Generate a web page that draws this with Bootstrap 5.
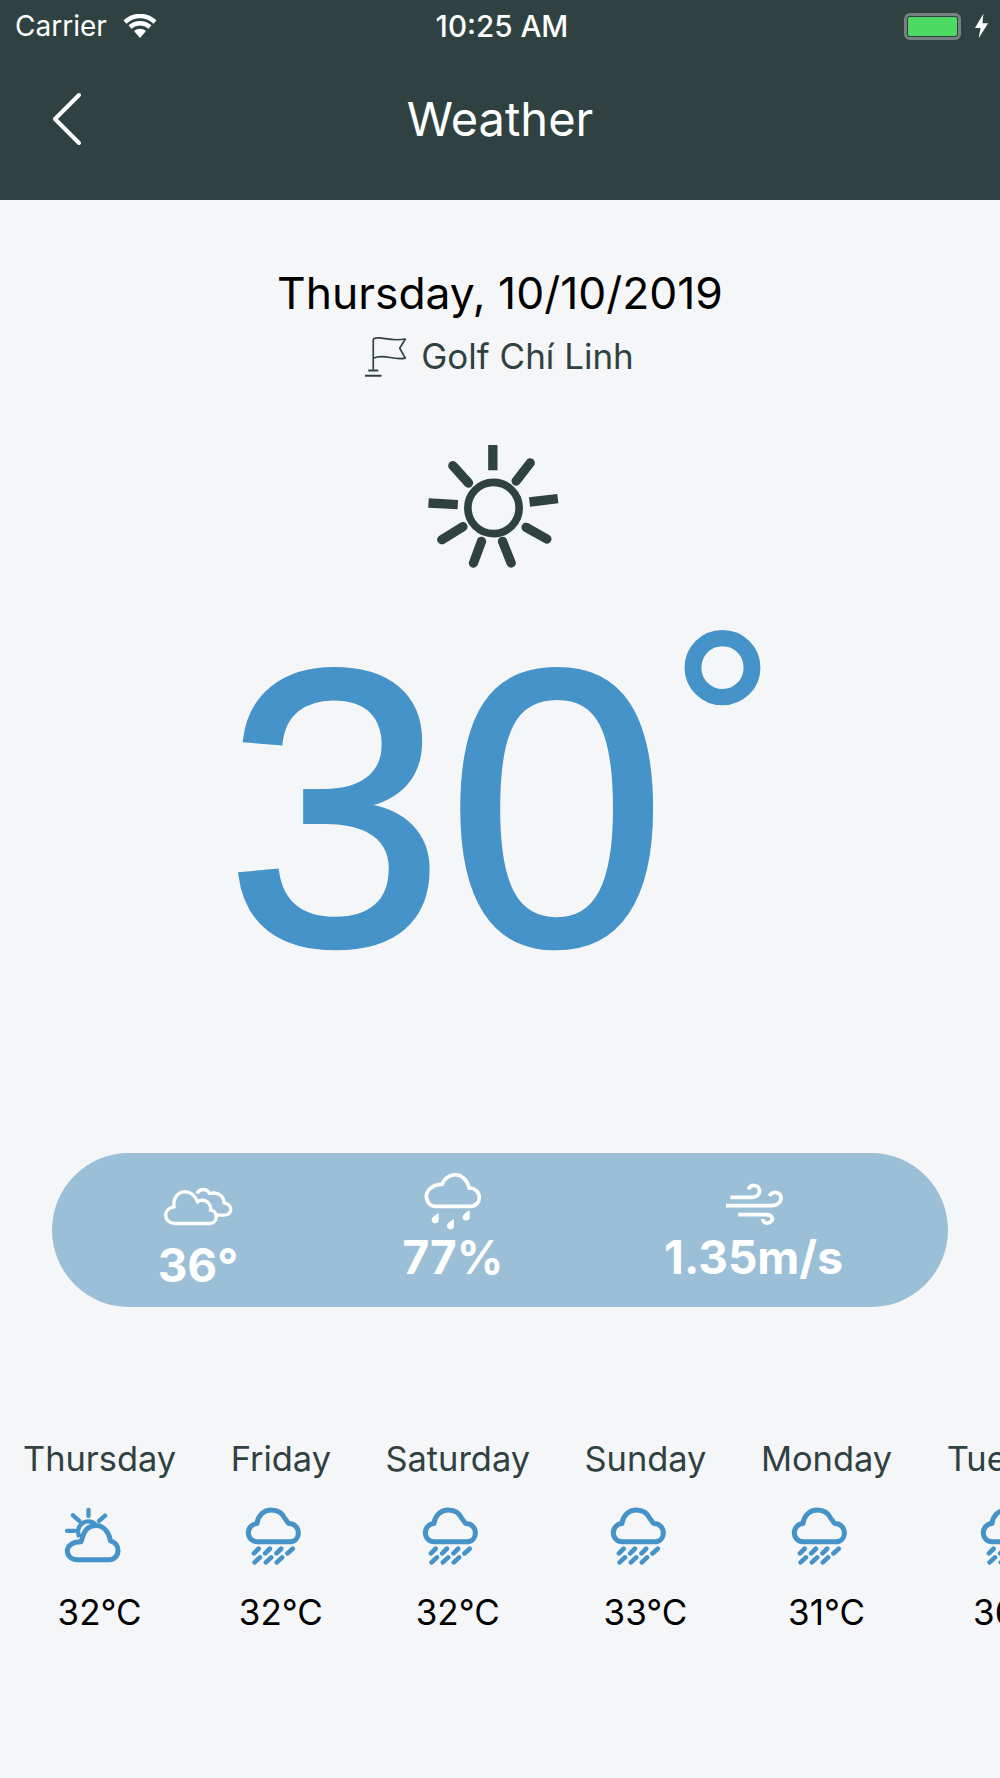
<!DOCTYPE html>
<html lang="en">
<head>
    <meta charset="UTF-8">
    <meta name="viewport" content="width=device-width, initial-scale=1.0">
    <title>Weather</title>
    <link href="https://cdn.jsdelivr.net/npm/bootstrap@5.3.0/dist/css/bootstrap.min.css" rel="stylesheet">
    <style>
        html, body {
            height: 1778px;
            overflow: hidden;
        }
        body {
            background-color: #f5f6f8;
            font-family: Inter, "Liberation Sans", sans-serif;
        }
        .app-head {
            background: #2f4241;
            height: 200px;
            color: #fff;
        }
        .status-row {
            height: 50px;
            padding: 2px 11px 0 15px;
            font-size: 28px;
        }
        .status-side {
            flex: 1 1 0;
        }
        .status-time {
            font-weight: 500;
            font-size: 29.6px;
        }
        .batt-box {
            width: 57px;
            height: 27px;
            border: 3px solid #76827f;
            border-radius: 6px;
            padding: 1px;
            margin-right: -3px;
        }
        .batt-fill {
            background: #4cd964;
            height: 100%;
            border-radius: 2px;
        }
        .title-row {
            height: 120px;
            padding-top: 18px;
        }
        .title-side {
            flex: 1 1 0;
            padding-left: 52px;
        }
        .page-title {
            font-size: 47px;
            font-weight: 400;
            margin: 0;
        }
        .date-line {
            font-size: 44.4px;
            line-height: 52px;
            color: #000;
            margin-top: 67px;
        }
        .place-line {
            font-size: 35px;
            line-height: 44px;
            color: #2f4241;
            margin-top: 15px;
            padding-right: 2px;
            gap: 14px;
        }
        .sun-wrap {
            margin-top: 59px;
            padding-right: 14px;
        }
        .big-temp {
            font-family: "Liberation Sans", sans-serif;
            font-size: 393px;
            line-height: 430px;
            letter-spacing: 3px;
            color: #4593c8;
            height: 430px;
            margin-top: 16px;
            padding-left: 3.4px;
            -webkit-text-stroke: 5px #4593c8;
        }
        .big-deg {
            font-size: 260px;
            line-height: 260px;
            margin-left: 1.6px;
            -webkit-text-stroke: 3px #4593c8;
        }
        .stat-pill {
            background: #9bbfd7;
            height: 154px;
            border-radius: 77px;
            margin: 130px 52px 0;
            color: #fff;
            font-weight: 700;
            font-size: 46px;
            line-height: 54px;
        }
        .stat-one { width: 292px; padding-top: 32px; }
        .stat-one svg { margin-bottom: 12px; }
        .stat-two { width: 218px; padding-top: 20px; }
        .stat-two svg { margin-bottom: -2px; }
        .stat-three { flex: 1 1 0; padding-top: 29px; padding-right: 3px; }
        .stat-three svg { margin-bottom: 4px; }
        .fc-strip {
            margin-top: 130px;
            padding-left: 23px;
            gap: 54.5px;
            white-space: nowrap;
        }
        .fc-day {
            font-size: 34.4px;
            line-height: 44px;
            color: #2f4241;
        }
        .fc-icon {
            margin-top: 26px;
            margin-right: 14px;
        }
        .fc-temp {
            font-size: 35px;
            line-height: 44px;
            color: #000;
            margin-top: 25px;
        }
    </style>
</head>
<body>
    <svg width="0" height="0" class="d-block">
        <symbol id="rain-cloud" viewBox="0 0 170 175">
            <path d="M36 105H134C150 105 160 93 160 78C160 62 148 50 132 50C128 50 125 40 120 36C112 18 96 9 78 9C56 9 38 26 35 50C20 51 9 63 9 78C9 94 21 105 36 105Z" fill="none" stroke="#4593c8" stroke-width="15" stroke-linejoin="round"/>
            <path d="M26 140L40 126M60 140L74 126M94 140L108 126M127 140L143 126M28 167L44 152M62 167L78 152M95 167L111 152" fill="none" stroke="#4593c8" stroke-width="14" stroke-linecap="round"/>
        </symbol>
        <symbol id="sun-cloud" viewBox="0 0 170 175">
            <path d="M38 159H136C151 159 162 147 162 131C162 116 152 105 139 102C135 75 118 56 96 56C78 56 65 66 58 82C56 90 52 100 50 105C24 105 9 117 9 133C9 148 21 159 38 159Z" fill="none" stroke="#4593c8" stroke-width="15" stroke-linejoin="round"/>
            <path d="M46 90A28 28 0 0 1 98 58" fill="none" stroke="#4593c8" stroke-width="13"/>
            <path d="M73 9V27M123 26L105 42M8 72H31M26 25L45 42" fill="none" stroke="#4593c8" stroke-width="13" stroke-linecap="round"/>
        </symbol>
    </svg>

    <header class="app-head">
        <div class="status-row d-flex align-items-center">
            <div class="status-side d-flex align-items-center gap-3">
                <span>Carrier</span>
                <svg width="34" height="24" viewBox="0 0 34 24">
                    <path d="M2 8C11 0 23 0 32 8M7 13C13 8 21 8 27 13" fill="none" stroke="#fff" stroke-width="4.5"/>
                    <path d="M11 17C15 14 19 14 23 17L17 24Z" fill="#fff"/>
                </svg>
            </div>
            <span class="status-time">10:25 AM</span>
            <div class="status-side d-flex align-items-center justify-content-end gap-3">
                <div class="batt-box"><div class="batt-fill"></div></div>
                <svg width="15" height="26" viewBox="0 0 16 26"><path d="M10 0L1 15H7L5 26L15 10H9Z" fill="#fff"/></svg>
            </div>
        </div>
        <div class="title-row d-flex align-items-center">
            <div class="title-side">
                <svg width="30" height="54" viewBox="0 0 30 54"><path d="M27 3L3 27L27 51" fill="none" stroke="#fff" stroke-width="4" stroke-linecap="round" stroke-linejoin="round"/></svg>
            </div>
            <h1 class="page-title">Weather</h1>
            <div class="title-side"></div>
        </div>
    </header>

    <main>
        <div class="date-line text-center">Thursday, 10/10/2019</div>
        <div class="place-line d-flex justify-content-center align-items-center">
            <svg width="43" height="43" viewBox="75 250 130 130">
                <path d="M103 262V355M103 262C125 250 150 272 200 262L183 290L200 320C160 328 140 305 103 320" fill="none" stroke="#2f4241" stroke-width="5" stroke-linejoin="round"/>
                <path d="M88 357H118M78 373H128" fill="none" stroke="#2f4241" stroke-width="6"/>
            </svg>
            <span>Golf Chí Linh</span>
        </div>

        <div class="sun-wrap d-flex justify-content-center">
            <svg width="147" height="140" viewBox="240 560 440 420">
                <circle cx="460" cy="773" r="77" fill="none" stroke="#2f4241" stroke-width="23"/>
                <path d="M458 584V660M653 745L568 755M265 758L353 763" fill="none" stroke="#2f4241" stroke-width="28"/>
                <path d="M570 638L528 692M620 866L558 831M513 938L487 873M400 938L424 873M305 868L368 829M338 646L385 698" fill="none" stroke="#2f4241" stroke-width="28" stroke-linecap="round"/>
            </svg>
        </div>

        <div class="big-temp d-flex justify-content-center">
            <span>30</span><span class="big-deg">°</span>
        </div>

        <section class="stat-pill d-flex align-items-start">
            <div class="stat-one text-center">
                <svg class="d-block mx-auto" width="70" height="41" viewBox="370 130 210 122">
                    <path d="M405 245H510C522 245 530 236 530 225C530 213 522 206 513 205C515 190 503 175 488 175C482 175 478 177 474 180C466 160 450 148 432 150C413 152 400 170 403 195C388 197 378 207 378 220C378 234 390 245 405 245Z" fill="none" stroke="#fff" stroke-width="10"/>
                    <path d="M472 155C480 140 500 138 510 155C530 150 552 158 553 183C568 185 575 197 573 206C571 215 562 220 552 220H532" fill="none" stroke="#fff" stroke-width="10"/>
                </svg>
                36°
            </div>
            <div class="stat-two text-center">
                <svg class="d-block mx-auto" width="62" height="59" viewBox="1140 98 186 177">
                    <path d="M1180 198H1285C1302 198 1312 185 1312 172C1312 155 1298 142 1282 143C1275 118 1258 103 1240 103C1220 103 1205 118 1200 132C1172 132 1153 150 1153 168C1153 185 1165 198 1180 198Z" fill="none" stroke="#fff" stroke-width="11"/>
                    <path d="M1190 218C1180 224 1169 232 1169 238A10 10 0 0 0 1190 238ZM1236 236C1226 242 1215 250 1215 256A10 10 0 0 0 1236 256ZM1283 210C1273 216 1262 224 1262 230A10 10 0 0 0 1283 230Z" fill="#fff"/>
                </svg>
                77%
            </div>
            <div class="stat-three text-center">
                <svg class="d-block mx-auto" width="58" height="44" viewBox="672 126 174 132">
                    <path d="M688 172H752C770 172 778 160 775 148C772 135 750 130 742 148M675 197H810C830 197 842 185 840 172C838 158 815 150 805 168M712 224H795C815 224 820 240 805 248C795 252 785 245 785 237" fill="none" stroke="#fff" stroke-width="11"/>
                </svg>
                1.35m/s
            </div>
        </section>

        <section class="fc-strip d-flex text-center">
            <div class="d-flex flex-column align-items-center"><div class="fc-day">Thursday</div><svg class="fc-icon" width="57" height="58"><use href="#sun-cloud"/></svg><div class="fc-temp">32°C</div></div>
            <div class="d-flex flex-column align-items-center"><div class="fc-day">Friday</div><svg class="fc-icon" width="57" height="58"><use href="#rain-cloud"/></svg><div class="fc-temp">32°C</div></div>
            <div class="d-flex flex-column align-items-center"><div class="fc-day">Saturday</div><svg class="fc-icon" width="57" height="58"><use href="#rain-cloud"/></svg><div class="fc-temp">32°C</div></div>
            <div class="d-flex flex-column align-items-center"><div class="fc-day">Sunday</div><svg class="fc-icon" width="57" height="58"><use href="#rain-cloud"/></svg><div class="fc-temp">33°C</div></div>
            <div class="d-flex flex-column align-items-center"><div class="fc-day">Monday</div><svg class="fc-icon" width="57" height="58"><use href="#rain-cloud"/></svg><div class="fc-temp">31°C</div></div>
            <div class="d-flex flex-column align-items-center"><div class="fc-day">Tuesday</div><svg class="fc-icon" width="57" height="58"><use href="#rain-cloud"/></svg><div class="fc-temp">36°C</div></div>
        </section>
    </main>
    <script src="https://cdn.jsdelivr.net/npm/bootstrap@5.3.0/dist/js/bootstrap.bundle.min.js"></script>
</body>
</html>
